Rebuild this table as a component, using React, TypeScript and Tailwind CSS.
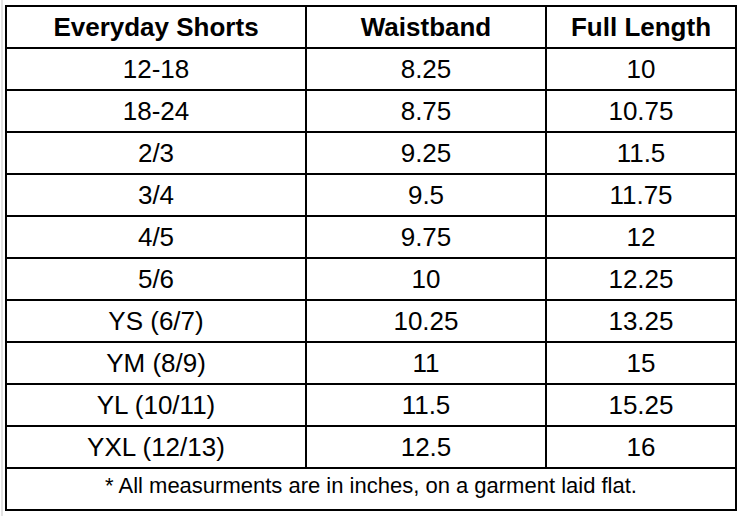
const rows: [string, string, string][] = [
  ["12-18", "8.25", "10"],
  ["18-24", "8.75", "10.75"],
  ["2/3", "9.25", "11.5"],
  ["3/4", "9.5", "11.75"],
  ["4/5", "9.75", "12"],
  ["5/6", "10", "12.25"],
  ["YS (6/7)", "10.25", "13.25"],
  ["YM (8/9)", "11", "15"],
  ["YL (10/11)", "11.5", "15.25"],
  ["YXL (12/13)", "12.5", "16"],
];

export default function App() {
  return (
    <div className="h-[516px] w-[740px] overflow-hidden bg-white font-['Liberation_Sans',Arial,sans-serif] text-black">
      <div className="ml-[1px] h-full border-l-2 border-[#e3e3e3] pt-[5px] pl-[2px]">
        <table className="w-[730px] table-fixed border-collapse border-2 border-black">
          <colgroup>
            <col className="w-[300px]" />
            <col className="w-[240px]" />
            <col className="w-[190px]" />
          </colgroup>
          <thead>
            <tr className="h-[42px]">
              <th className="border-2 border-black p-0 text-center text-[26px] font-bold leading-none">
                Everyday Shorts
              </th>
              <th className="border-2 border-black p-0 text-center text-[26px] font-bold leading-none">
                Waistband
              </th>
              <th className="border-2 border-black p-0 text-center text-[26px] font-bold leading-none">
                Full Length
              </th>
            </tr>
          </thead>
          <tbody>
            {rows.map(([size, waist, length]) => (
              <tr key={size} className="h-[42px]">
                <td className="border-2 border-black p-0 text-center text-[26px] leading-none">
                  {size}
                </td>
                <td className="border-2 border-black p-0 text-center text-[26px] leading-none">
                  {waist}
                </td>
                <td className="border-2 border-black p-0 text-center text-[26px] leading-none">
                  {length}
                </td>
              </tr>
            ))}
            <tr className="h-[42px]">
              <td
                colSpan={3}
                className="border-2 border-black p-0 pb-[6px] text-center text-[22px] leading-none"
              >
                * All measurments are in inches, on a garment laid flat.
              </td>
            </tr>
          </tbody>
        </table>
      </div>
    </div>
  );
}
